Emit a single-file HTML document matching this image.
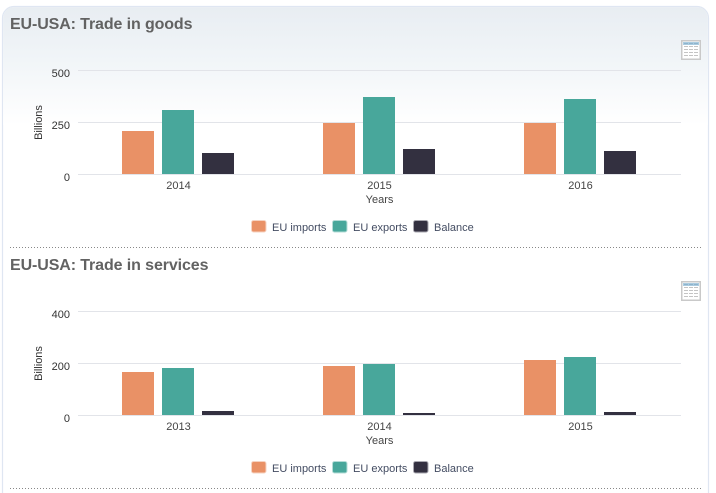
<!DOCTYPE html>
<html>
<head>
<meta charset="utf-8">
<style>
html,body{margin:0;padding:0;background:#fff;width:716px;height:493px;overflow:hidden}
svg{position:absolute;left:0;top:0;display:block}
text{font-family:"Liberation Sans",sans-serif}
.t{font-size:16px;font-weight:bold;fill:#626262}
.l{font-size:11px;fill:#333}
.yl{font-size:11px;fill:#333;text-anchor:end}
.c{font-size:11px;fill:#444;text-anchor:middle}
.k{font-size:11px;fill:#434c62}
.g{fill:#e2e4e9}
.o{fill:#e99166}
.e{fill:#48a79b}
.b{fill:#333040}
.so{fill:#e99166;stroke:#f6d3c2;stroke-width:1}
.se{fill:#48a79b;stroke:#b5dcd7;stroke-width:1}
.sb{fill:#333040;stroke:#aaa9b1;stroke-width:1}
</style>
</head>
<body>
<svg width="716" height="493" viewBox="0 0 716 493" xmlns="http://www.w3.org/2000/svg">
<defs>
<linearGradient id="bg" x1="0" y1="0" x2="0" y2="1">
<stop offset="0" stop-color="#e8edf2"/>
<stop offset="0.45" stop-color="#f1f5f8"/>
<stop offset="1" stop-color="#ffffff"/>
</linearGradient>
<g id="ic">
<rect x="0" y="0" width="20" height="20" fill="#c9c9c9"/>
<rect x="1.500" y="1.500" width="17" height="17" fill="#fff"/>
<rect x="2" y="2" width="16" height="3" fill="#a9cbe0"/>
<path d="M3 3.500h4M8 3.500h4M13 3.500h4" stroke="#8fb3cb" stroke-width="1"/>
<path d="M3 6.500h4M8 6.500h4M13 6.500h4M3 9.500h4M8 9.500h4M13 9.500h4M3 12.500h4M8 12.500h4M13 12.500h4M3 15.500h4M8 15.500h4M13 15.500h4" stroke="#c4c4c4" stroke-width="1"/>
</g>
</defs>

<path d="M2.500 505V18a11.500 11.500 0 0 1 11.500-11.500H697a11.500 11.500 0 0 1 11.500 11.500V505Z" fill="#fff" stroke="#dfe6f2" stroke-width="1.200"/>
<path d="M3.100 125V18a10.900 10.900 0 0 1 10.900-10.900H697a10.900 10.900 0 0 1 10.900 10.900V125Z" fill="url(#bg)"/>

<text class="t" x="10" y="29" textLength="182.500">EU-USA: Trade in goods</text>
<use href="#ic" x="681" y="40"/>

<rect class="g" x="78" y="70" width="603" height="1"/>
<rect class="g" x="78" y="122" width="603" height="1"/>
<rect class="g" x="78" y="174" width="603" height="1"/>
<text class="yl" x="70" y="77">500</text>
<text class="yl" x="70" y="129">250</text>
<text class="yl" x="70" y="181">0</text>
<text class="l" transform="translate(42 122.500) rotate(-90)" text-anchor="middle" fill="#333">Billions</text>

<rect class="o" x="122" y="131" width="32" height="43"/>
<rect class="e" x="162" y="110" width="32" height="64"/>
<rect class="b" x="202" y="153" width="32" height="21"/>
<rect class="o" x="323" y="123" width="32" height="51"/>
<rect class="e" x="363" y="97" width="32" height="77"/>
<rect class="b" x="403" y="149" width="32" height="25"/>
<rect class="o" x="524" y="123" width="32" height="51"/>
<rect class="e" x="564" y="99" width="32" height="75"/>
<rect class="b" x="604" y="151" width="32" height="23"/>

<text class="c" x="178.500" y="189">2014</text>
<text class="c" x="379.500" y="189">2015</text>
<text class="c" x="580.500" y="189">2016</text>
<text class="c" x="379.500" y="203">Years</text>

<rect class="so" x="251.500" y="220.500" width="14.500" height="11.500" rx="2"/>
<text class="k" x="272" y="231">EU imports</text>
<rect class="se" x="332.500" y="220.500" width="14.500" height="11.500" rx="2"/>
<text class="k" x="353" y="231">EU exports</text>
<rect class="sb" x="413.500" y="220.500" width="14.500" height="11.500" rx="2"/>
<text class="k" x="434" y="231">Balance</text>

<path d="M10 247.500H702" stroke="#888" stroke-width="1" stroke-dasharray="1 2"/>

<text class="t" x="10" y="270" textLength="198.500">EU-USA: Trade in services</text>
<use href="#ic" x="681" y="281"/>

<rect class="g" x="78" y="311" width="603" height="1"/>
<rect class="g" x="78" y="363" width="603" height="1"/>
<rect class="g" x="78" y="415" width="603" height="1"/>
<text class="yl" x="70" y="318">400</text>
<text class="yl" x="70" y="370">200</text>
<text class="yl" x="70" y="422">0</text>
<text class="l" transform="translate(42 363.500) rotate(-90)" text-anchor="middle" fill="#333">Billions</text>

<rect class="o" x="122" y="372" width="32" height="43"/>
<rect class="e" x="162" y="368" width="32" height="47"/>
<rect class="b" x="202" y="411" width="32" height="4"/>
<rect class="o" x="323" y="366" width="32" height="49"/>
<rect class="e" x="363" y="364" width="32" height="51"/>
<rect class="b" x="403" y="413" width="32" height="2"/>
<rect class="o" x="524" y="360" width="32" height="55"/>
<rect class="e" x="564" y="357" width="32" height="58"/>
<rect class="b" x="604" y="412" width="32" height="3"/>

<text class="c" x="178.500" y="430">2013</text>
<text class="c" x="379.500" y="430">2014</text>
<text class="c" x="580.500" y="430">2015</text>
<text class="c" x="379.500" y="444">Years</text>

<rect class="so" x="251.500" y="461.500" width="14.500" height="11.500" rx="2"/>
<text class="k" x="272" y="472">EU imports</text>
<rect class="se" x="332.500" y="461.500" width="14.500" height="11.500" rx="2"/>
<text class="k" x="353" y="472">EU exports</text>
<rect class="sb" x="413.500" y="461.500" width="14.500" height="11.500" rx="2"/>
<text class="k" x="434" y="472">Balance</text>

<path d="M10 488.500H702" stroke="#888" stroke-width="1" stroke-dasharray="1 2"/>
</svg>
</body>
</html>
